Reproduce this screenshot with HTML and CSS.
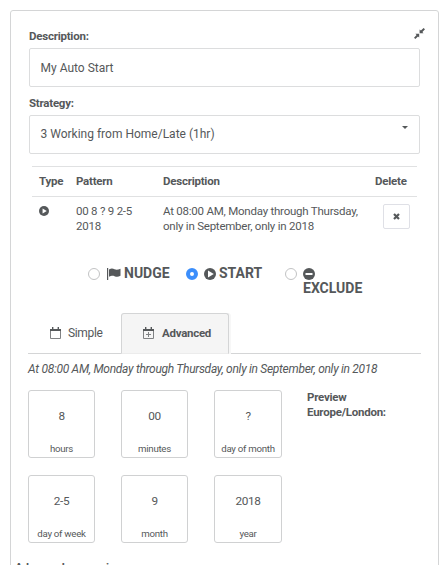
FILE: index.html
```
<!DOCTYPE html>
<html lang="en">
<head>
    <meta charset="UTF-8">
    <meta name="viewport" content="width=device-width, initial-scale=1.0">
    <title>Auto Start</title>
    <link rel="stylesheet" href="styles.css">
</head>
<body>
    <div class="page">
        <div class="panel">
            <svg class="compress" width="11" height="11" viewBox="0 0 11 11">
                <path d="M5.6 1.4 L6.9 2.5 L9.6 0 L11 1.2 L8.4 3.9 L9.5 5.2 H5.6 Z M5.2 5.7 V9.5 L4 8.4 L1.3 11 L0 9.7 L2.6 7.1 L1.4 5.7 Z"/>
            </svg>

            <!-- Description and strategy -->
            <div class="fields">
                <label class="label">Description:</label>
                <div class="input"><span>My Auto Start</span></div>
                <label class="label">Strategy:</label>
                <div class="input select"><span>3 Working from Home/Late (1hr)</span><i class="caret"></i></div>
            </div>

            <!-- Schedule table -->
            <table class="schedule">
                <tr>
                    <th class="col-type">Type</th>
                    <th class="col-pattern">Pattern</th>
                    <th class="col-desc">Description</th>
                    <th class="col-delete">Delete</th>
                </tr>
                <tr>
                    <td>
                        <svg class="type-icon" width="10" height="10" viewBox="0 0 12 12">
                            <circle cx="6" cy="6" r="6"/><path class="cut" d="M4.3 2.9 L9.3 6 L4.3 9.1 Z"/>
                        </svg>
                    </td>
                    <td>00 8 ? 9 2-5<br>2018</td>
                    <td>At 08:00 AM, Monday through Thursday,<br>only in September, only in 2018</td>
                    <td>
                        <div class="remove">
                            <svg width="7" height="7" viewBox="0 0 7 7"><path class="cross" d="M1 1 L6 6 M6 1 L1 6"/></svg>
                        </div>
                    </td>
                </tr>
            </table>

            <!-- Nudge / start / exclude -->
            <div class="modes">
                <div class="mode mode-nudge">
                    <i class="radio"></i>
                    <svg width="14" height="12" viewBox="0 0 14 12">
                        <path d="M0 0 H1.2 V12 H0 Z M2 1.5 C4.5 0 6 .6 7.5 1.2 C9.5 2 11 1.6 13.5 .7 V7.8 C11 9.2 9.5 9 7.5 8.2 C5.8 7.5 4.5 7.6 2 8.8 Z"/>
                    </svg>
                    <span>NUDGE</span>
                </div>
                <div class="mode mode-start">
                    <i class="radio checked"></i>
                    <svg width="12" height="12" viewBox="0 0 12 12">
                        <circle cx="6" cy="6" r="6"/><path class="cut" d="M4 2.6 L9.8 6 L4 9.4 Z"/>
                    </svg>
                    <span>START</span>
                </div>
                <div class="mode mode-exclude">
                    <i class="radio"></i>
                    <div class="stack">
                        <svg width="12" height="12" viewBox="0 0 12 12">
                            <circle cx="6" cy="6" r="6"/><path class="cut" d="M2.5 5 H9.5 V7 H2.5 Z"/>
                        </svg>
                        <span>EXCLUDE</span>
                    </div>
                </div>
            </div>

            <!-- Tabs -->
            <div class="tabs">
                <div class="tab">
                    <svg width="11" height="12" viewBox="0 0 11 12">
                        <path class="line" d="M.5 3.5 H10.5 V11.5 H.5 Z"/><path d="M0 2 H11 V4 H0 Z M2 0 H3.4 V2 H2 Z M7.6 0 H9 V2 H7.6 Z"/>
                    </svg>
                    <span>Simple</span>
                </div>
                <div class="tab active">
                    <svg width="11" height="12" viewBox="0 0 11 12">
                        <path class="line" d="M.5 3.5 H10.5 V11.5 H.5 Z M5.5 5 V10 M3 7.5 H8"/><path d="M0 2 H11 V4 H0 Z M2 0 H3.4 V2 H2 Z M7.6 0 H9 V2 H7.6 Z"/>
                    </svg>
                    <span>Advanced</span>
                </div>
            </div>

            <p class="summary">At 08:00 AM, Monday through Thursday, only in September, only in 2018</p>

            <!-- Cron parts -->
            <div class="cron">
                <div class="parts">
                    <div class="part"><b>8</b><span>hours</span></div>
                    <div class="part"><b>00</b><span>minutes</span></div>
                    <div class="part"><b>?</b><span>day of month</span></div>
                    <div class="part"><b>2-5</b><span>day of week</span></div>
                    <div class="part"><b>9</b><span>month</span></div>
                    <div class="part"><b>2018</b><span>year</span></div>
                </div>
                <div class="preview">Preview<br>Europe/London:</div>
            </div>

            <div class="expression">Advanced expression</div>
        </div>
    </div>
</body>
</html>
```
FILE: styles.css
```
* {
    box-sizing: border-box;
}

body {
    margin: 0;
    background: #fff;
    color: #55585a;
    font-family: Roboto, "Liberation Sans", sans-serif;
    font-size: 11.5px;
    letter-spacing: -0.23px;
    line-height: 15px;
}

svg {
    display: block;
    flex: none;
    fill: #55585a;
}

.cut {
    fill: #fff;
}

.line {
    fill: none;
    stroke: #808284;
}

.page {
    height: 565px;
    padding: 10px 8px 0 10px;
    overflow: hidden;
}

.panel {
    position: relative;
    height: 600px;
    padding: 18px 17px 0;
    border: 1px solid #d4d5d6;
    border-radius: 3px;
}

/* sits over the corner of the panel */
.compress {
    position: absolute;
    top: 17px;
    right: 13px;
}

/* Fields */
.fields {
    padding-left: 1px;
}

.label {
    display: block;
    height: 19px;
    font-weight: bold;
}

.input {
    display: flex;
    justify-content: space-between;
    width: 391px;
    height: 39px;
    margin-bottom: 9px;
    padding: 0 11px 0 10.5px;
    border: 1px solid #dcddde;
    border-radius: 2px;
    font-size: 12px;
    letter-spacing: 0;
    line-height: 38px;
}

.select {
    line-height: 37px;
}

.caret {
    margin-top: 10px;
    width: 0;
    height: 3px;
    border: 3px solid transparent;
    border-top-color: #55585a;
    border-bottom: 0;
}

/* Table */
.schedule {
    width: 385px;
    margin: 12px 0 0 4px;
    border-collapse: collapse;
    table-layout: fixed;
}

.schedule th {
    height: 30px;
    padding: 0 0 0 7px;
    border-top: 1px solid #e0e1e2;
    border-bottom: 1px solid #e0e1e2;
    text-align: left;
}

.schedule td {
    padding: 7px 0 0 7px;
    vertical-align: top;
    white-space: nowrap;
}

.col-type { width: 37px; }
.col-pattern { width: 87px; }
.col-desc { width: 212px; }

.type-icon {
    margin-top: 2px;
}

.remove {
    display: flex;
    align-items: center;
    justify-content: center;
    width: 27px;
    height: 25px;
    margin-left: 8px;
    border: 1px solid #dfe0e6;
    border-radius: 2px;
}

.cross {
    stroke: #55585a;
    stroke-width: 2.2;
}

/* Modes */
.modes {
    display: flex;
    height: 47px;
    margin: 32px 0 0 60px;
    font-size: 14px;
    font-weight: bold;
    letter-spacing: 0;
}

.mode {
    display: flex;
    align-items: flex-start;
}

.mode svg {
    margin: 2px 3px 0 7px;
}

.mode-start svg {
    margin-left: 6px;
}

.mode-nudge { width: 98px; }
.mode-start { width: 99px; }

.radio {
    width: 12px;
    height: 12px;
    margin-top: 2px;
    border: 1px solid #c2c3c4;
    border-radius: 50%;
}

.radio.checked {
    border: 4px solid #3b8efb;
}

.mode .stack {
    margin-left: 6px;
}

.mode .stack svg {
    margin: 2px 0 1px;
}

.stack span {
    display: block;
}

/* Tabs */
.tabs {
    display: flex;
    height: 41px;
    border-bottom: 1px solid #d4d5d6;
}

.tab {
    display: flex;
    align-items: center;
    width: 93px;
    height: 41px;
    padding-left: 22px;
    font-size: 12px;
    letter-spacing: -0.35px;
}

.tab svg {
    margin-bottom: 2px;
}

.tab span {
    margin-left: 7px;
}

.tab.active {
    width: 108px;
    padding-left: 21px;
    border: 1px solid #d4d5d6;
    border-bottom-color: #ececec;
    border-radius: 3px 3px 0 0;
    background: #f5f5f5;
    box-shadow: 2px 0 #f7f7f7;
    font-size: 11.5px;
    font-weight: bold;
    letter-spacing: -0.27px;
}

.tab.active span {
    margin-left: 8px;
}

.summary {
    margin: 8px 0 13px;
    font-size: 12px;
    font-style: italic;
    letter-spacing: -0.29px;
    white-space: nowrap;
}

/* Cron */
.cron {
    display: flex;
}

.parts {
    display: grid;
    grid-template-columns: 67px 67px 68px;
    gap: 17px 26px;
}

.part {
    height: 68px;
    padding-top: 18px;
    border: 1px solid #d0d1d2;
    border-radius: 3px;
    font-size: 9.7px;
    letter-spacing: -0.28px;
    text-align: center;
    white-space: nowrap;
}

.part b {
    display: block;
    height: 32px;
    font-size: 11.8px;
    font-weight: normal;
    letter-spacing: -0.4px;
}

.preview {
    margin-left: 25px;
    font-weight: bold;
}

.expression {
    margin: 17px 0 0 -13px;
    font-weight: bold;
}
```
